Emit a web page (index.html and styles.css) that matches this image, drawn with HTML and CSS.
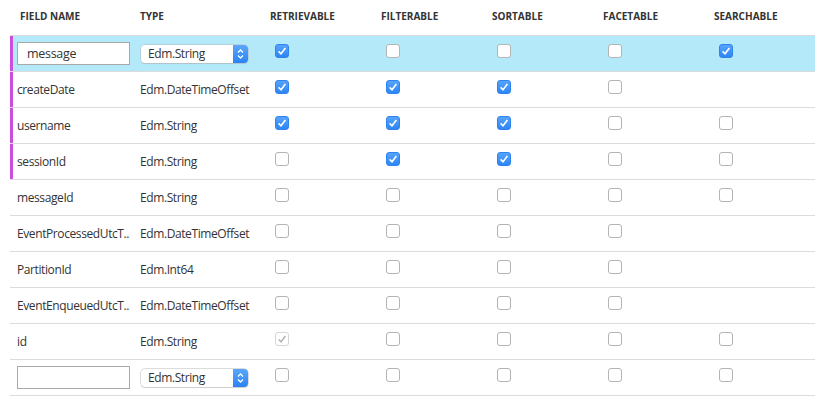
FILE: index.html
```html
<!DOCTYPE html>
<html>
<head>
<meta charset="utf-8">
<link rel="stylesheet" href="styles.css">
</head>
<body>
<div class="fields">
  <div class="row head">
    <div class="c name">FIELD NAME</div>
    <div class="c type">TYPE</div>
    <div class="c">RETRIEVABLE</div>
    <div class="c">FILTERABLE</div>
    <div class="c">SORTABLE</div>
    <div class="c">FACETABLE</div>
    <div class="c">SEARCHABLE</div>
  </div>

  <div class="row sel mark">
    <div class="c name"><div class="input">message</div></div>
    <div class="c type"><div class="select"><span class="sv">Edm.String</span><span class="arrow"><svg width="15" height="18" viewBox="0 0 15 18"><path d="M5 7.5 L7.5 5 L10 7.5 M5 10.5 L7.5 13 L10 10.5" fill="none" stroke="#fff" stroke-width="1.3"/></svg></span></div></div>
    <div class="c"><span class="cb on"><svg viewBox="0 0 14 14"><path d="M3.6 7.4 L6 9.8 L10.4 4" fill="none" stroke="#fff" stroke-width="1.6"/></svg></span></div>
    <div class="c"><span class="cb"></span></div>
    <div class="c"><span class="cb"></span></div>
    <div class="c"><span class="cb"></span></div>
    <div class="c"><span class="cb on"><svg viewBox="0 0 14 14"><path d="M3.6 7.4 L6 9.8 L10.4 4" fill="none" stroke="#fff" stroke-width="1.6"/></svg></span></div>
  </div>

  <div class="row mark">
    <div class="c name">createDate</div>
    <div class="c type">Edm.DateTimeOffset</div>
    <div class="c"><span class="cb on"><svg viewBox="0 0 14 14"><path d="M3.6 7.4 L6 9.8 L10.4 4" fill="none" stroke="#fff" stroke-width="1.6"/></svg></span></div>
    <div class="c"><span class="cb on"><svg viewBox="0 0 14 14"><path d="M3.6 7.4 L6 9.8 L10.4 4" fill="none" stroke="#fff" stroke-width="1.6"/></svg></span></div>
    <div class="c"><span class="cb on"><svg viewBox="0 0 14 14"><path d="M3.6 7.4 L6 9.8 L10.4 4" fill="none" stroke="#fff" stroke-width="1.6"/></svg></span></div>
    <div class="c"><span class="cb"></span></div>
    <div class="c"></div>
  </div>

  <div class="row mark">
    <div class="c name">username</div>
    <div class="c type">Edm.String</div>
    <div class="c"><span class="cb on"><svg viewBox="0 0 14 14"><path d="M3.6 7.4 L6 9.8 L10.4 4" fill="none" stroke="#fff" stroke-width="1.6"/></svg></span></div>
    <div class="c"><span class="cb on"><svg viewBox="0 0 14 14"><path d="M3.6 7.4 L6 9.8 L10.4 4" fill="none" stroke="#fff" stroke-width="1.6"/></svg></span></div>
    <div class="c"><span class="cb on"><svg viewBox="0 0 14 14"><path d="M3.6 7.4 L6 9.8 L10.4 4" fill="none" stroke="#fff" stroke-width="1.6"/></svg></span></div>
    <div class="c"><span class="cb"></span></div>
    <div class="c"><span class="cb"></span></div>
  </div>

  <div class="row mark">
    <div class="c name">sessionId</div>
    <div class="c type">Edm.String</div>
    <div class="c"><span class="cb"></span></div>
    <div class="c"><span class="cb on"><svg viewBox="0 0 14 14"><path d="M3.6 7.4 L6 9.8 L10.4 4" fill="none" stroke="#fff" stroke-width="1.6"/></svg></span></div>
    <div class="c"><span class="cb on"><svg viewBox="0 0 14 14"><path d="M3.6 7.4 L6 9.8 L10.4 4" fill="none" stroke="#fff" stroke-width="1.6"/></svg></span></div>
    <div class="c"><span class="cb"></span></div>
    <div class="c"><span class="cb"></span></div>
  </div>

  <div class="row">
    <div class="c name">messageId</div>
    <div class="c type">Edm.String</div>
    <div class="c"><span class="cb"></span></div>
    <div class="c"><span class="cb"></span></div>
    <div class="c"><span class="cb"></span></div>
    <div class="c"><span class="cb"></span></div>
    <div class="c"><span class="cb"></span></div>
  </div>

  <div class="row">
    <div class="c name">EventProcessedUtcT..</div>
    <div class="c type">Edm.DateTimeOffset</div>
    <div class="c"><span class="cb"></span></div>
    <div class="c"><span class="cb"></span></div>
    <div class="c"><span class="cb"></span></div>
    <div class="c"><span class="cb"></span></div>
    <div class="c"></div>
  </div>

  <div class="row">
    <div class="c name">PartitionId</div>
    <div class="c type">Edm.Int64</div>
    <div class="c"><span class="cb"></span></div>
    <div class="c"><span class="cb"></span></div>
    <div class="c"><span class="cb"></span></div>
    <div class="c"><span class="cb"></span></div>
    <div class="c"></div>
  </div>

  <div class="row">
    <div class="c name">EventEnqueuedUtcT..</div>
    <div class="c type">Edm.DateTimeOffset</div>
    <div class="c"><span class="cb"></span></div>
    <div class="c"><span class="cb"></span></div>
    <div class="c"><span class="cb"></span></div>
    <div class="c"><span class="cb"></span></div>
    <div class="c"></div>
  </div>

  <div class="row">
    <div class="c name">id</div>
    <div class="c type">Edm.String</div>
    <div class="c"><span class="cb dis"><svg viewBox="0 0 14 14"><path d="M3.6 7.4 L6 9.8 L10.4 4" fill="none" stroke="#a8a8a8" stroke-width="1.3"/></svg></span></div>
    <div class="c"><span class="cb"></span></div>
    <div class="c"><span class="cb"></span></div>
    <div class="c"><span class="cb"></span></div>
    <div class="c"><span class="cb"></span></div>
  </div>

  <div class="row">
    <div class="c name"><div class="input"></div></div>
    <div class="c type"><div class="select"><span class="sv">Edm.String</span><span class="arrow"><svg width="15" height="18" viewBox="0 0 15 18"><path d="M5 7.5 L7.5 5 L10 7.5 M5 10.5 L7.5 13 L10 10.5" fill="none" stroke="#fff" stroke-width="1.3"/></svg></span></div></div>
    <div class="c"><span class="cb"></span></div>
    <div class="c"><span class="cb"></span></div>
    <div class="c"><span class="cb"></span></div>
    <div class="c"><span class="cb"></span></div>
    <div class="c"><span class="cb"></span></div>
  </div>
</div>
</body>
</html>
```

FILE: styles.css
```css
html, body {
  margin: 0;
  padding: 0;
  background: #fff;
}
body {
  font-family: "Open Sans", "Noto Sans", sans-serif;
  color: #333;
}
.fields {
  margin-left: 10px;
  width: 805px;
}
.row {
  display: grid;
  grid-template-columns: 130px 130px 111px 111px 111px 111px 1fr;
  height: 35px;
  border-bottom: 1px solid #dcdcdc;
  align-items: center;
  font-size: 12px;
  letter-spacing: -0.4px;
}
.row.mark {
  box-shadow: inset 3px 0 0 #cb4fdc;
}
.row.sel {
  background: #b3e9f8;
}
.row .c.name {
  padding-left: 7px;
  white-space: nowrap;
  overflow: hidden;
}
.row.head {
  align-items: start;
  font-size: 10px;
  font-weight: 700;
  letter-spacing: 0;
  color: #333;
}
.row.head .c {
  padding-top: 9px;
  line-height: 14px;
}
.row.head .c.name {
  padding-left: 10px;
}
.cb {
  display: block;
  box-sizing: border-box;
  width: 14px;
  height: 14px;
  margin-left: 5px;
  margin-top: -5px;
  border: 1px solid #b4b4b4;
  border-radius: 3px;
  background: #fff;
}
.cb svg {
  display: block;
  width: 14px;
  height: 14px;
  margin: -1px;
}
.cb.on {
  border-color: #2f83ee;
  background: linear-gradient(#57a3fb, #2d86f4);
}
.cb.dis {
  border-color: #d6d6d6;
}
.input {
  box-sizing: border-box;
  width: 113px;
  height: 23px;
  border: 1px solid #a9a9a9;
  background: #fff;
  padding-left: 9px;
  line-height: 21px;
  font-size: 12.5px;
  letter-spacing: -0.3px;
}
.select {
  box-sizing: border-box;
  display: flex;
  width: 107px;
  height: 18px;
  margin-left: 1px;
  border-radius: 4px;
  background: #fff;
  box-shadow: 0 0 0 0.5px #b9b9b9, 0 1px 1px rgba(0,0,0,0.12);
  overflow: hidden;
}
.select .sv {
  flex: 1;
  padding-left: 7px;
  line-height: 18px;
  font-size: 12px;
}
.select .arrow {
  width: 15px;
  height: 18px;
  background: linear-gradient(#5aa6fb, #2a83f4);
}
.select .arrow svg {
  display: block;
}
```
